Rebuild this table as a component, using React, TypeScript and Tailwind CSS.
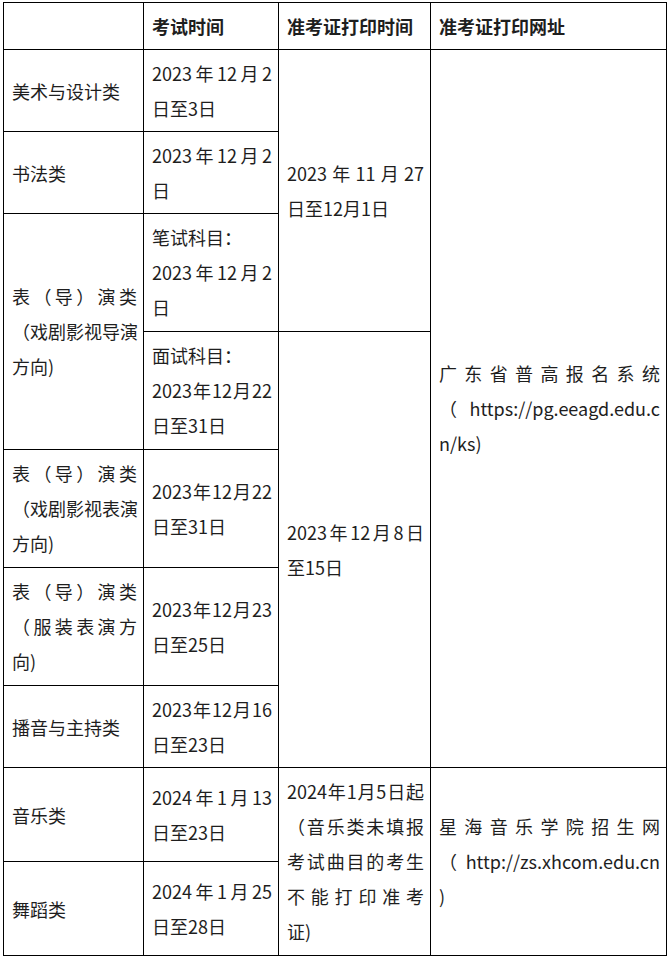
import React from 'react';

// each string is one line of the picture; every line but the last is stretched to the full width
const Lines = ({ lines }: { lines: string[] }) => (
  <>
    {lines.map((l, i) => (
      <div
        key={i}
        className={
          i < lines.length - 1
            ? 'whitespace-nowrap text-justify [text-align-last:justify]'
            : 'whitespace-nowrap text-left'
        }
      >
        {l}
      </div>
    ))}
  </>
);

const cell = 'border border-black align-middle pl-[8px] pr-[6px] pt-[6px]';

const Td = ({
  lines,
  rowSpan,
  tall,
  children,
}: {
  lines?: string[];
  rowSpan?: number;
  tall?: boolean;
  children?: React.ReactNode;
}) => (
  <td rowSpan={rowSpan} className={cell + (tall || (lines && lines.length >= 3) ? ' pb-[6px]' : ' pb-[5px]')}>
    {lines ? <Lines lines={lines} /> : children}
  </td>
);

export default function App() {
  return (
    <div className="pl-[3px] pt-[2px] bg-white min-h-screen">
      <table
        className="table-fixed border-collapse w-[663px] text-[18px] leading-[35px] text-[#1e1e1e]"
        style={{ fontFamily: '"Noto Sans CJK SC", "Noto Sans", sans-serif' }}
      >
        <colgroup>
          <col className="w-[140px]" />
          <col className="w-[135px]" />
          <col className="w-[152px]" />
          <col className="w-[236px]" />
        </colgroup>
        <thead>
          <tr className="font-bold">
            <th className={cell + ' pb-[5px]'}></th>
            <th className={cell + ' pb-[5px] text-left'}>考试时间</th>
            <th className={cell + ' pb-[5px] text-left'}>准考证打印时间</th>
            <th className={cell + ' pb-[5px] text-left'}>准考证打印网址</th>
          </tr>
        </thead>
        <tbody>
          <tr>
            <Td lines={['美术与设计类']} />
            <Td lines={['2023年12月2', '日至3日']} />
            <Td rowSpan={3} lines={['2023年11月27', '日至12月1日']} />
            <Td rowSpan={7} lines={['广东省普高报名系统', '（https://pg.eeagd.edu.c', 'n/ks)']} />
          </tr>
          <tr>
            <Td lines={['书法类']} />
            <Td lines={['2023年12月2', '日']} />
          </tr>
          <tr>
            <Td rowSpan={2} lines={['表（导）演类', '（戏剧影视导演', '方向)']} />
            <Td tall>
              <div className="text-left">笔试科目：</div>
              <Lines lines={['2023年12月2', '日']} />
            </Td>
          </tr>
          <tr>
            <Td tall>
              <div className="text-left">面试科目：</div>
              <Lines lines={['2023年12月22', '日至31日']} />
            </Td>
            <Td rowSpan={4} lines={['2023年12月8日', '至15日']} />
          </tr>
          <tr>
            <Td lines={['表（导）演类', '（戏剧影视表演', '方向)']} />
            <Td lines={['2023年12月22', '日至31日']} />
          </tr>
          <tr>
            <Td lines={['表（导）演类', '（服装表演方', '向)']} />
            <Td lines={['2023年12月23', '日至25日']} />
          </tr>
          <tr>
            <Td lines={['播音与主持类']} />
            <Td lines={['2023年12月16', '日至23日']} />
          </tr>
          <tr>
            <Td lines={['音乐类']} />
            <Td lines={['2024年1月13', '日至23日']} />
            <Td
              rowSpan={2}
              lines={['2024年1月5日起', '（音乐类未填报', '考试曲目的考生', '不能打印准考', '证)']}
            />
            <Td rowSpan={2} lines={['星海音乐学院招生网', '（http://zs.xhcom.edu.cn', ')']} />
          </tr>
          <tr>
            <Td lines={['舞蹈类']} />
            <Td lines={['2024年1月25', '日至28日']} />
          </tr>
        </tbody>
      </table>
    </div>
  );
}
